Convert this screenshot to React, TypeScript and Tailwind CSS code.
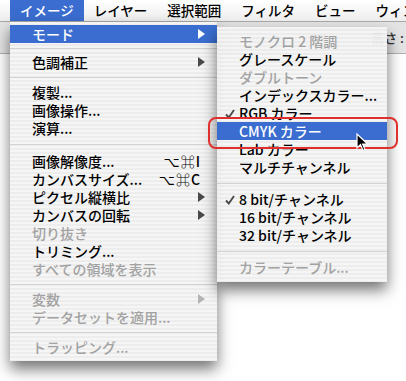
import React from "react";

type Item =
  | { sep: true; h: string }
  | {
      sep?: false;
      label: string;
      disabled?: boolean;
      active?: boolean;
      arrow?: boolean;
      shortcut?: string;
      check?: boolean;
    };

const mainItems: Item[] = [
  { label: "モード", active: true, arrow: true },
  { sep: true, h: "h-[10px]" },
  { label: "色調補正", arrow: true },
  { sep: true, h: "h-[12px]" },
  { label: "複製..." },
  { label: "画像操作..." },
  { label: "演算..." },
  { sep: true, h: "h-[15px]" },
  { label: "画像解像度...", shortcut: "⌥⌘I" },
  { label: "カンバスサイズ...", shortcut: "⌥⌘C" },
  { label: "ピクセル縦横比", arrow: true },
  { label: "カンバスの回転", arrow: true },
  { label: "切り抜き", disabled: true },
  { label: "トリミング..." },
  { label: "すべての領域を表示", disabled: true },
  { sep: true, h: "h-[12px]" },
  { label: "変数", disabled: true, arrow: true },
  { label: "データセットを適用...", disabled: true },
  { sep: true, h: "h-[12px]" },
  { label: "トラッピング...", disabled: true },
];

const modeItems: Item[] = [
  { label: "モノクロ 2 階調", disabled: true },
  { label: "グレースケール" },
  { label: "ダブルトーン", disabled: true },
  { label: "インデックスカラー..." },
  { label: "RGB カラー", check: true },
  { label: "CMYK カラー", active: true },
  { label: "Lab カラー" },
  { label: "マルチチャンネル" },
  { sep: true, h: "h-[14px]" },
  { label: "8 bit/チャンネル", check: true },
  { label: "16 bit/チャンネル" },
  { label: "32 bit/チャンネル" },
  { sep: true, h: "h-[14px]" },
  { label: "カラーテーブル...", disabled: true },
];

const font = "font-['Noto_Sans_CJK_JP','DejaVu_Sans',sans-serif]";

const Arrow = ({ color }: { color: string }) => (
  <svg width="7" height="10" viewBox="0 0 7 10" className="shrink-0">
    <polygon points="0,0 7,5 0,10" fill={color} />
  </svg>
);

const Check = () => (
  <svg width="10" height="10" viewBox="0 0 10 10" className="absolute left-[8px] top-[5px]">
    <path d="M1 5.5 L3.8 8.5 L9 1" stroke="#4a4a4a" strokeWidth="1.9" fill="none" />
  </svg>
);

function MenuList({ items }: { items: Item[] }) {
  return (
    <>
      {items.map((it, i) => {
        if (it.sep) {
          return (
            <div key={i} className={`${it.h} flex items-center`}>
              <div className="h-px w-full bg-[#d2d2d2]" />
            </div>
          );
        }
        const color = it.active
          ? "text-white bg-[#3a6dcf]"
          : it.disabled
          ? "text-[#a2a2a2]"
          : "text-black";
        return (
          <div
            key={i}
            className={`relative h-[18px] flex items-center justify-between pl-[22px] pr-[12px] whitespace-nowrap leading-[18px] ${color}`}
          >
            {it.check && <Check />}
            <span>{it.label}</span>
            {it.shortcut && <span className="mr-[4px] tracking-[1px]">{it.shortcut}</span>}
            {it.arrow && (
              <Arrow color={it.active ? "#ffffff" : it.disabled ? "#b4b4b4" : "#4a4a4a"} />
            )}
          </div>
        );
      })}
    </>
  );
}

const stripes =
  "bg-[image:repeating-linear-gradient(180deg,rgba(245,245,245,0.95)_0px,rgba(245,245,245,0.95)_2px,rgba(236,236,236,0.95)_2px,rgba(236,236,236,0.95)_4px)]";

export default function App() {
  const bar = ["イメージ", "レイヤー", "選択範囲", "フィルタ", "ビュー", "ウィンドウ"];
  return (
    <div className={`relative w-[406px] h-[381px] overflow-hidden bg-white ${font} text-[14px] font-medium`}>
      {/* menubar */}
      <div className="h-[22px] flex items-stretch pl-[10px] bg-gradient-to-b from-[#ffffff] to-[#eeeeee] border-b border-[#a8a8a8] whitespace-nowrap text-[13.5px] overflow-hidden">
        {bar.map((b, i) => (
          <div
            key={b}
            className={`flex items-center px-[10px] shrink-0 ${i === 0 ? "bg-[#3a6dcf] text-white" : "text-black"}`}
          >
            {b}
          </div>
        ))}
      </div>
      {/* toolbar behind */}
      <div className="h-[32px] bg-[#e4e4e4] border-b border-[#b0b0b0] flex items-center justify-end pr-[2px] text-[13px] text-[#333]">
        高さ :
      </div>

      {/* image menu */}
      <div
        className={`absolute left-[10px] top-[22px] w-[207px] pt-[3px] pb-[5px] ${stripes} shadow-[0_8px_14px_rgba(0,0,0,0.55)]`}
      >
        <MenuList items={mainItems} />
      </div>

      {/* mode submenu */}
      <div
        className={`absolute left-[217px] top-[27px] w-[170px] pt-[5px] pb-[6px] ${stripes} shadow-[0_8px_14px_rgba(0,0,0,0.55)]`}
      >
        <MenuList items={modeItems} />
      </div>

      {/* red highlight ring */}
      <div className="absolute left-[208px] top-[117px] w-[190px] h-[32px] border-2 border-[#e0302e] rounded-[8px]" />

      {/* cursor */}
      <svg className="absolute left-[356px] top-[133px]" width="13" height="20" viewBox="0 0 13 20">
        <path d="M1 1 L1 15 L4.5 11.5 L7 17.5 L9 16.6 L6.6 11 L11.5 11 Z" fill="#000" stroke="#fff" strokeWidth="1.2" />
      </svg>
    </div>
  );
}
